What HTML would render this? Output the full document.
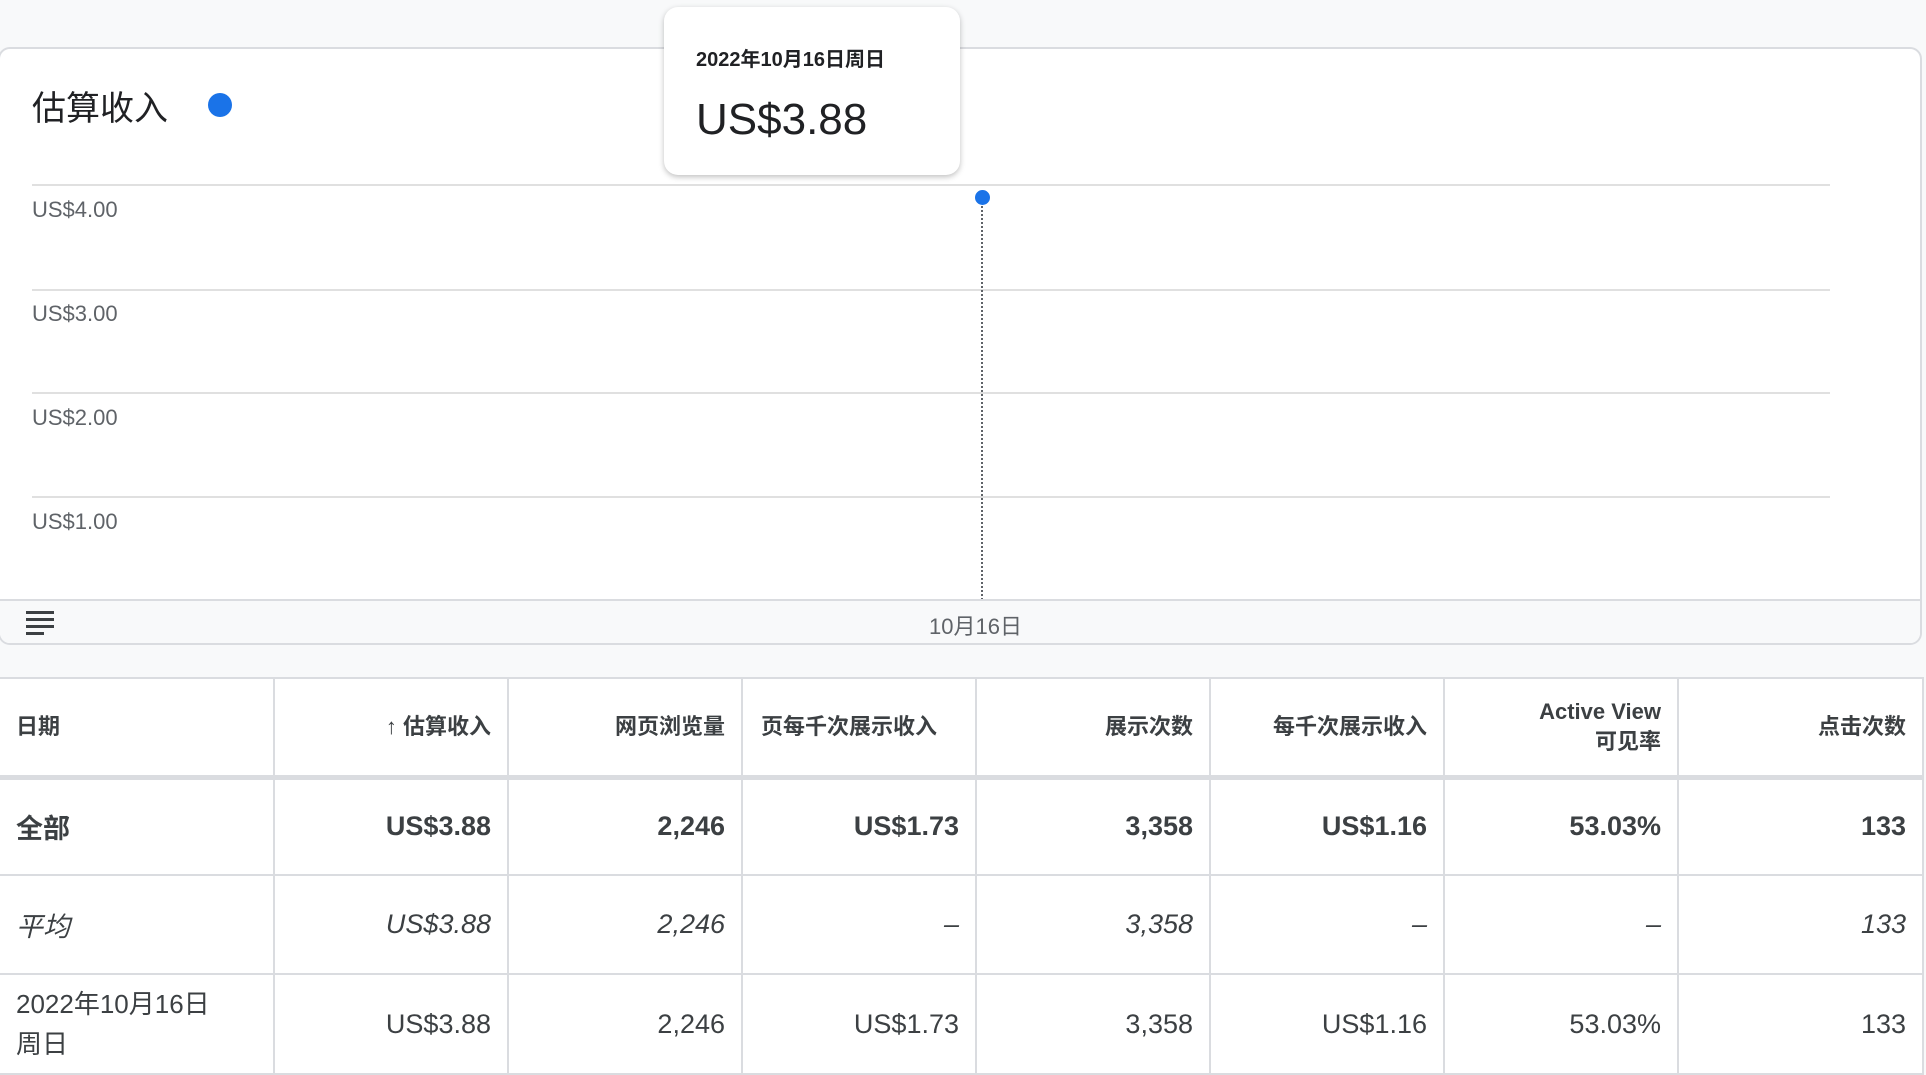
<!DOCTYPE html>
<html><head><meta charset="utf-8"><style>
*{margin:0;padding:0;box-sizing:border-box}
body{width:1926px;height:1066px;overflow:hidden;background:#f8f9fa;font-family:"Liberation Sans","Noto Sans CJK SC",sans-serif;color:#3c4043;position:relative}
.card{position:absolute;left:-2px;top:47px;width:1924px;height:598px;background:#fff;border:2px solid #dadce0;border-radius:12px;overflow:hidden}
.title{position:absolute;left:32px;top:80px;font-size:34px;color:#202124}
.dot{position:absolute;left:208px;top:92px;width:24px;height:24px;border-radius:50%;background:#1a73e8}
.grid{position:absolute;left:32px;width:1798px;height:2px;background:#e0e0e0}
.lbl{position:absolute;left:32px;font-size:22px;color:#5f6368}
.foot{position:absolute;left:0;top:599px;width:1926px;height:46px;background:#f8f9fa;border-top:2px solid #dadce0}
.tip{position:absolute;left:664px;top:7px;width:296px;height:168px;background:#fff;border-radius:14px;box-shadow:0 2px 6px rgba(0,0,0,.25);}
table{position:absolute;left:-2px;top:677px;border-collapse:collapse;background:#fff;table-layout:fixed}
td,th{border:2px solid #dadce0;text-align:right;padding:0 16px;font-size:23px;white-space:nowrap;overflow:hidden}
th{height:99px;font-weight:bold;color:#3c4043;font-size:22px;line-height:30px}
tr.h th{border-bottom:5px solid #dadce0}
td{font-size:27px}
td:first-child,th:first-child{text-align:left}
tr.all td{font-weight:bold;height:98px}
tr.avg td{font-style:italic;height:99px}
tr.d td{height:100px;vertical-align:middle}
</style></head><body>
<div class="card">
<div class="title" style="top:32px">估算收入</div>
<div class="dot" style="top:44px"></div>
<div class="grid" style="top:135px"></div>
<div class="grid" style="top:240px"></div>
<div class="grid" style="top:343px"></div>
<div class="grid" style="top:447px"></div>
<div class="lbl" style="top:148px">US$4.00</div>
<div class="lbl" style="top:252px">US$3.00</div>
<div class="lbl" style="top:356px">US$2.00</div>
<div class="lbl" style="top:460px">US$1.00</div>
<div style="position:absolute;left:981px;top:149px;height:402px;border-left:2px dotted #5f6368"></div>
<div style="position:absolute;left:975px;top:141px;width:15px;height:15px;border-radius:50%;background:#1a73e8"></div>
<div class="foot" style="top:550px">
<svg style="position:absolute;left:26px;top:8px" width="30" height="28" viewBox="0 0 30 28"><g fill="#3c4043"><rect x="0" y="2" width="28" height="3"/><rect x="0" y="9" width="28" height="3"/><rect x="0" y="16" width="28" height="3"/><rect x="0" y="23" width="18" height="3"/></g></svg>
<div style="position:absolute;left:929px;top:8px;font-size:22px;color:#5f6368">10月16日</div>
</div>
</div>
<div class="tip">
<div style="position:absolute;left:32px;top:36px;font-size:20px;font-weight:bold;color:#202124">2022年10月16日周日</div>
<div style="position:absolute;left:32px;top:88px;font-size:44px;color:#202124">US$3.88</div>
</div>
<table>
<colgroup><col style="width:275px"><col style="width:234px"><col style="width:234px"><col style="width:234px"><col style="width:234px"><col style="width:234px"><col style="width:234px"><col style="width:245px"></colgroup>
<tr class="h"><th>日期</th><th><span style="font-weight:normal">↑</span> 估算收入</th><th>网页浏览量</th><th style="text-align:left;padding-left:18px">页每千次展示收入</th><th>展示次数</th><th>每千次展示收入</th><th>Active View<br>可见率</th><th>点击次数</th></tr>
<tr class="all"><td>全部</td><td>US$3.88</td><td>2,246</td><td>US$1.73</td><td>3,358</td><td>US$1.16</td><td>53.03%</td><td>133</td></tr>
<tr class="avg"><td>平均</td><td>US$3.88</td><td>2,246</td><td>–</td><td>3,358</td><td>–</td><td>–</td><td>133</td></tr>
<tr class="d"><td style="font-size:26px;line-height:40px">2022年10月16日<br>周日</td><td>US$3.88</td><td>2,246</td><td>US$1.73</td><td>3,358</td><td>US$1.16</td><td>53.03%</td><td>133</td></tr>
</table>
</body></html>
